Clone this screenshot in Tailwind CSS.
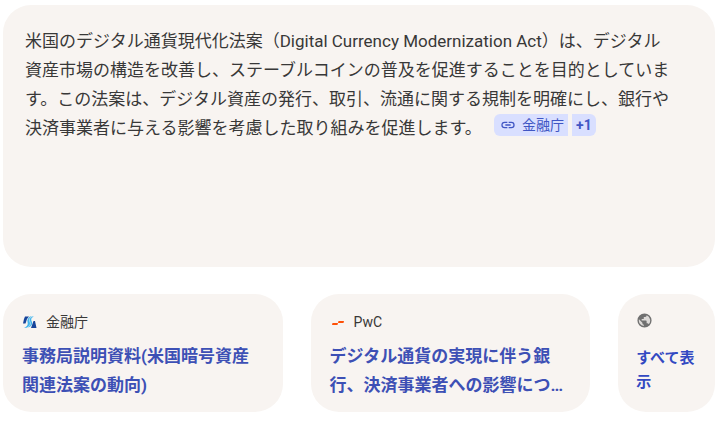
<!DOCTYPE html>
<html lang="ja">
  <head>
    <meta charset="UTF-8" />
    <meta name="viewport" content="width=device-width, initial-scale=1.0" />
    <title>米国のデジタル通貨現代化法案</title>
    <script src="https://cdn.jsdelivr.net/npm/@tailwindcss/browser@4"></script>
  </head>
  <body class="bg-white pt-[5px] pr-[5px] pb-2 pl-[3px] font-[Roboto,'Noto_Sans_CJK_JP',sans-serif] text-[#383838]">
    <main class="flex flex-col gap-[27px]">
      <section class="min-h-[262px] rounded-[28px] bg-[#f8f4f1] pt-[22px] pr-10 pb-6 pl-[22px]">
        <p class="text-[17px] leading-[29px]">
          米国のデジタル通貨現代化法案（Digital Currency Modernization Act）は、デジタル資産市場の構造を改善し、ステーブルコインの普及を促進することを目的としています。この法案は、デジタル資産の発行、取引、流通に関する規制を明確にし、銀行や決済事業者に与える影響を考慮した取り組みを促進します。
          <span class="ml-2 inline-flex gap-1 align-top text-sm leading-[22px] text-[#4056c4]">
            <a href="#fsa" class="flex items-center gap-1.5 rounded-l-md bg-[#d9dfff] pr-1 pl-1.5">
              <svg class="size-4" viewBox="0 0 24 24" fill="currentColor" aria-hidden="true">
                <path d="M3.900 12c0-1.710 1.390-3.100 3.100-3.100h4V7H7a5 5 0 0 0 0 10h4v-1.900H7A3.100 3.100 0 0 1 3.900 12zM8 13h8v-2H8v2zm9-6h-4v1.900h4a3.100 3.100 0 0 1 0 6.200h-4V17h4a5 5 0 0 0 0-10z" />
              </svg>
              金融庁
            </a>
            <button type="button" class="rounded-r-md bg-[#d9dfff] px-1 font-bold">+1</button>
          </span>
        </p>
      </section>

      <nav class="grid grid-cols-[280fr_280fr_97fr] gap-7" aria-label="情報源">
        <a id="fsa" href="#fsa" class="block rounded-[28px] bg-[#f8f4f1] px-[19px] pt-[18px] pb-3">
          <span class="flex items-center gap-2 text-sm leading-5">
            <svg class="size-4" viewBox="0 0 16 16" aria-hidden="true">
              <path fill="#17449b" d="M3 2.500H7L5 5 3.500 9.500H1L2 5zM11.500 7H13l1.500 7H9z" />
              <path fill="#3fb4ed" d="M8 2.500h4C8.500 4 9 6 10 8c1 3-2 6-8 6 4-2 4-4 3.500-6C5 6 6 4 8 2.500z" />
              <path fill="none" stroke="#f8f4f1" stroke-width=".6" d="M10 2.500C7 4 7 6 8 8s0 4-3 6" />
            </svg>
            金融庁
          </span>
          <span class="mt-2.5 block text-[17px] leading-[29px] font-bold text-[#3d50b5]">事務局説明資料(米国暗号資産関連法案の動向)</span>
        </a>

        <a href="#pwc" class="block rounded-[28px] bg-[#f8f4f1] px-[19px] pt-[18px] pb-3">
          <span class="flex items-center gap-2 text-sm leading-5">
            <svg class="size-4" viewBox="0 0 16 16" fill="#fd5108" aria-hidden="true">
              <path d="M2.500 9H8L7.500 11H2zM8.500 7H14L13.500 9H8z" />
            </svg>
            PwC
          </span>
          <span class="mt-2.5 block text-[17px] leading-[29px] font-bold text-[#3d50b5]">デジタル通貨の実現に伴う銀行、決済事業者への影響につ…</span>
        </a>

        <a href="#all" class="block rounded-[28px] bg-[#f8f4f1] pt-[18px] pr-[17px] pb-3 pl-[18px]">
          <svg class="size-[17px]" viewBox="0 0 24 24" aria-hidden="true">
            <circle cx="12" cy="12" r="9" fill="#dddad8" />
            <path fill="#707070" d="M12 2a10 10 0 1 0 0 20 10 10 0 0 0 0-20zm-1 17.930A8 8 0 0 1 4.210 10.210L9 15v1a2 2 0 0 0 2 2v1.930zm6.900-2.540A2 2 0 0 0 16 16h-1v-3a1 1 0 0 0-1-1H8v-2h2a1 1 0 0 0 1-1V7h2a2 2 0 0 0 2-2v-.410a8 8 0 0 1 2.900 12.800z" />
          </svg>
          <span class="mt-[17px] block text-[15px] leading-6 font-bold text-[#3349c2]">すべて表示</span>
        </a>
      </nav>
    </main>
  </body>
</html>
